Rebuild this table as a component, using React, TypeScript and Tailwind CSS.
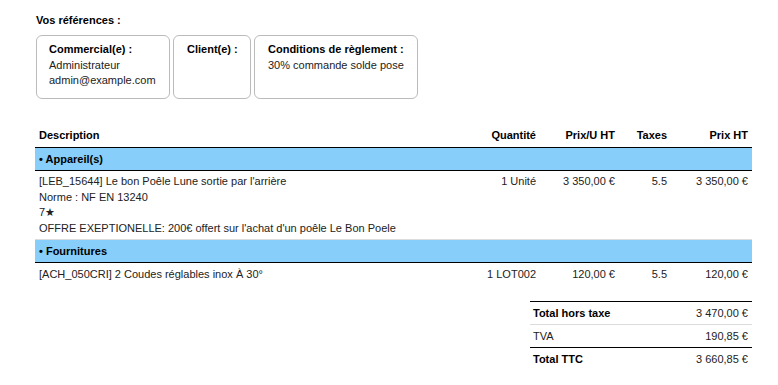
import React from "react";

const font = { fontFamily: '"Liberation Sans", Arial, sans-serif' };

export default function App() {
  return (
    <div
      className="w-[778px] h-[385px] bg-white text-[11px] text-[#222] pl-[35px] pt-[13px] overflow-hidden"
      style={font}
    >
      <div className="pl-[1px] font-bold text-black leading-[15px]">Vos références :</div>
      <div className="flex gap-[3px] mt-[7px] pl-[1px] leading-[15.5px]">
        <div className="w-[134px] h-[64px] border border-[#bbb] rounded-[6px] pl-[12px] pt-[6px]">
          <div className="font-bold text-black">Commercial(e) :</div>
          <div>Administrateur</div>
          <div>admin@example.com</div>
        </div>
        <div className="w-[78px] h-[64px] border border-[#bbb] rounded-[6px] pl-[13px] pt-[6px]">
          <div className="font-bold text-black">Client(e) :</div>
        </div>
        <div className="w-[164px] h-[64px] border border-[#bbb] rounded-[6px] pl-[13px] pt-[6px]">
          <div className="font-bold text-black">Conditions de règlement :</div>
          <div>30% commande solde pose</div>
        </div>
      </div>

      <table className="mt-[25px] w-[717px] table-fixed border-collapse">
        <colgroup>
          <col className="w-[425px]" />
          <col className="w-[80px]" />
          <col className="w-[79px]" />
          <col className="w-[52px]" />
          <col className="w-[81px]" />
        </colgroup>
        <thead>
          <tr className="border-b border-black font-bold text-black leading-[15px]">
            <td className="px-[4px] py-[4px] text-left">Description</td>
            <td className="px-[4px] py-[4px] text-right">Quantité</td>
            <td className="px-[4px] py-[4px] text-right">Prix/U HT</td>
            <td className="px-[4px] py-[4px] text-right">Taxes</td>
            <td className="px-[4px] py-[4px] text-right">Prix HT</td>
          </tr>
        </thead>
        <tbody>
          <tr className="bg-[#87cefa] border-b border-black font-bold text-black leading-[16px]">
            <td colSpan={5} className="px-[4px] py-[3px]">• Appareil(s)</td>
          </tr>
          <tr className="border-b border-[#dcdcdc] leading-[15.5px] align-top">
            <td className="px-[4px] pt-[3px] pb-[3px]">
              <div>[LEB_15644] Le bon Poêle Lune sortie par l'arrière</div>
              <div>Norme : NF EN 13240</div>
              <div>7★</div>
              <div className="whitespace-nowrap">OFFRE EXEPTIONELLE: 200€ offert sur l'achat d'un poêle Le Bon Poele</div>
            </td>
            <td className="px-[4px] pt-[3px] text-right">1 Unité</td>
            <td className="px-[4px] pt-[3px] text-right">3 350,00 €</td>
            <td className="px-[4px] pt-[3px] text-right">5.5</td>
            <td className="px-[4px] pt-[3px] text-right">3 350,00 €</td>
          </tr>
          <tr className="bg-[#87cefa] border-b border-black font-bold text-black leading-[16px]">
            <td colSpan={5} className="px-[4px] py-[3px]">• Fournitures</td>
          </tr>
          <tr className="leading-[15.5px] align-top">
            <td className="px-[4px] pt-[4px] pb-[3px]">[ACH_050CRI] 2 Coudes réglables inox À 30°</td>
            <td className="px-[4px] pt-[4px] text-right">1 LOT002</td>
            <td className="px-[4px] pt-[4px] text-right">120,00 €</td>
            <td className="px-[4px] pt-[4px] text-right">5.5</td>
            <td className="px-[4px] pt-[4px] text-right">120,00 €</td>
          </tr>
        </tbody>
      </table>

      <div className="w-[717px] flex justify-end mt-[15px]">
        <table className="w-[222px] table-fixed border-collapse leading-[16px]">
          <colgroup>
            <col className="w-[110px]" />
            <col className="w-[112px]" />
          </colgroup>
          <tbody>
            <tr className="border-t border-black border-b border-b-[#dcdcdc]">
              <td className="pl-[3px] py-[3px] font-bold text-black">Total hors taxe</td>
              <td className="pr-[4px] py-[3px] text-right">3 470,00 €</td>
            </tr>
            <tr className="border-b border-black">
              <td className="pl-[3px] py-[3px]">TVA</td>
              <td className="pr-[4px] py-[3px] text-right">190,85 €</td>
            </tr>
            <tr>
              <td className="pl-[3px] py-[3px] font-bold text-black">Total TTC</td>
              <td className="pr-[4px] py-[3px] text-right">3 660,85 €</td>
            </tr>
          </tbody>
        </table>
      </div>
    </div>
  );
}
